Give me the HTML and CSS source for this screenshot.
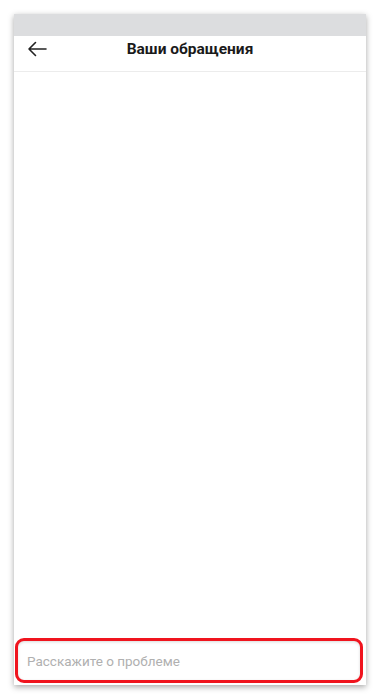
FILE: index.html
```html
<!DOCTYPE html>
<html lang="ru">
<head>
<meta charset="utf-8">
<link rel="stylesheet" href="styles.css">
</head>
<body>
<div class="phone">
  <div class="status"></div>
  <div class="header">
    <svg class="back" width="20" height="16" viewBox="0 0 20 16"><path d="M19 8H2M8.5 1.5L2 8l6.5 6.5" fill="none" stroke="#222" stroke-width="1.6" stroke-linecap="round" stroke-linejoin="round"/></svg>
    <div class="title">Ваши обращения</div>
  </div>
  <div class="content"></div>
  <div class="composer">
    <div class="field">Расскажите о проблеме</div>
  </div>
</div>
</body>
</html>
```
FILE: styles.css
```css
html, body { margin: 0; padding: 0; background: #fff; }
body { font-family: Roboto, "Noto Sans", sans-serif; width: 381px; height: 700px; overflow: hidden; }
.phone {
  margin: 14px 0 0 14px;
  width: 352px;
  height: 671px;
  background: #fff;
  display: flex;
  flex-direction: column;
  box-shadow: 0 2px 6px rgba(0,0,0,0.35);
}
.status { height: 22px; background: #dcdddf; }
.header {
  height: 35px;
  border-bottom: 1px solid #ececec;
  position: relative;
  display: flex;
  align-items: center;
  justify-content: center;
}
.back { position: absolute; left: 13px; top: 5px; }
.title { font-size: 15.5px; font-weight: 700; color: #1a1a1a; margin-top: -10px; }
.content { flex: 1; }
.composer { padding: 0 3px 2px 1px; }
.field {
  height: 39px;
  border: 3px solid #f0141e;
  border-radius: 9px;
  display: flex;
  align-items: center;
  padding-left: 9px;
  font-size: 13.5px;
  color: #b0b0b0;
  box-shadow: inset 0 1px 3px rgba(0,0,0,0.15);
}
```
